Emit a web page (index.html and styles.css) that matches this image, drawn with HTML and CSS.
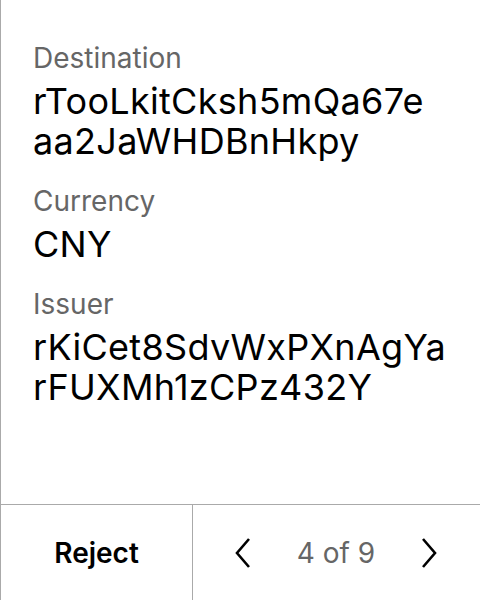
FILE: index.html
```html
<!DOCTYPE html>
<html>
<head>
<meta charset="utf-8">
<link rel="stylesheet" href="styles.css">
</head>
<body>
<div class="screen">
  <div class="content">
    <div class="field">
      <div class="label">Destination</div>
      <div class="value">rTooLkitCksh5mQa67e<br>aa2JaWHDBnHkpy</div>
    </div>
    <div class="field">
      <div class="label">Currency</div>
      <div class="value">CNY</div>
    </div>
    <div class="field">
      <div class="label">Issuer</div>
      <div class="value">rKiCet8SdvWxPXnAgYa<br>rFUXMh1zCPz432Y</div>
    </div>
  </div>
  <div class="footer">
    <div class="reject">Reject</div>
    <div class="pager">
      <svg class="chev" width="20" height="32" viewBox="0 0 20 32"><path d="M17 2 L5 16 L17 30" fill="none" stroke="#000" stroke-width="2.6"/></svg>
      <span class="count">4 of 9</span>
      <svg class="chev" width="20" height="32" viewBox="0 0 20 32"><path d="M3 2 L15 16 L3 30" fill="none" stroke="#000" stroke-width="2.6"/></svg>
    </div>
  </div>
</div>
</body>
</html>
```
FILE: styles.css
```css
html, body {
  margin: 0;
  padding: 0;
  background: #fff;
}
body {
  font-family: Inter, "Liberation Sans", sans-serif;
}
.screen {
  width: 480px;
  height: 600px;
  box-sizing: border-box;
  border-left: 1px solid #aaaaaa;
  display: flex;
  flex-direction: column;
}
.content {
  flex: 1;
  padding: 41px 20px 0 32px;
  display: flex;
  flex-direction: column;
  gap: 23px;
}
.field {
  display: flex;
  flex-direction: column;
  gap: 6px;
}
.label {
  font-size: 28px;
  line-height: 34px;
  color: #666666;
}
.value {
  font-size: 36px;
  line-height: 40px;
  letter-spacing: 0.3px;
  color: #000;
  white-space: nowrap;
}
.footer {
  height: 96px;
  border-top: 1px solid #aaaaaa;
  display: grid;
  grid-template-columns: 192px 1fr;
  box-sizing: border-box;
}
.reject {
  border-right: 1px solid #aaaaaa;
  display: flex;
  align-items: center;
  justify-content: center;
  font-size: 28px;
  font-weight: 600;
  color: #000;
}
.pager {
  display: flex;
  align-items: center;
  justify-content: space-between;
  padding: 0 40px 0 39px;
}
.count {
  font-size: 28px;
  color: #666666;
}
.chev {
  display: block;
}
```
